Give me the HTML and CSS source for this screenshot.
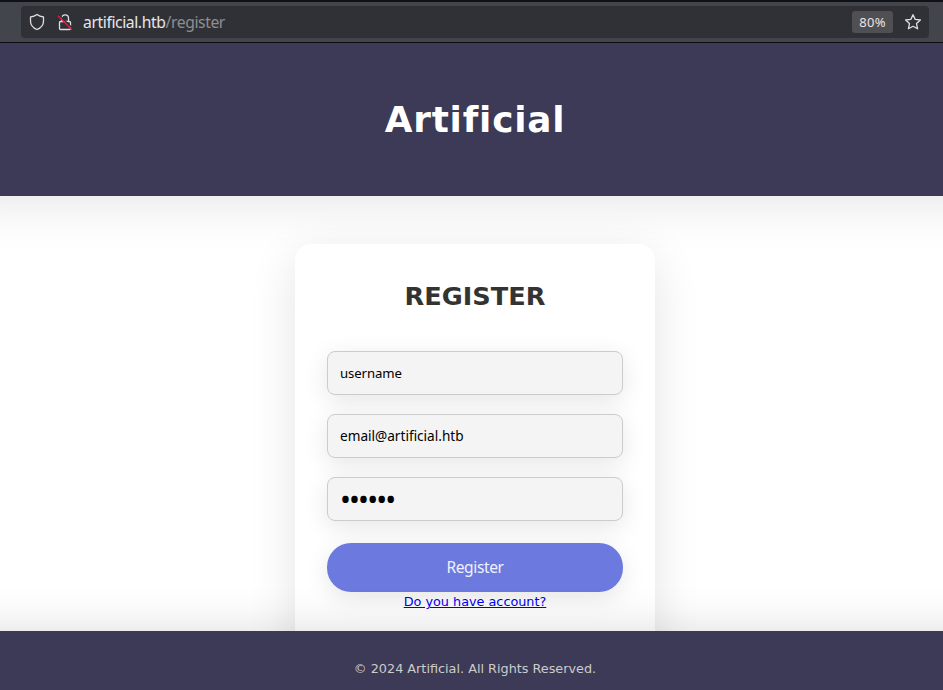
FILE: index.html
```html
<!DOCTYPE html>
<html lang="en">
<head>
<meta charset="utf-8">
<title>Artificial - Register</title>
<link rel="stylesheet" href="styles.css">
</head>
<body>
<div class="toolbar">
  <div class="urlbar">
    <svg class="shield" width="16" height="18" viewBox="0 0 16 18"><path d="M8 1.500C6.300 2.900 3.800 3.800 1.500 4V8c0 3.700 2.600 7 6.500 8.500 3.900-1.500 6.500-4.800 6.500-8.500V4C12.200 3.800 9.700 2.900 8 1.500Z"/></svg>
    <svg class="lock" width="16" height="18" viewBox="0 0 16 18"><path d="M4.700 8.500V5.200a3.400 3.400 0 0 1 6.800 0v3.300M3.500 8.500h9q1 0 1 1v6q0 1-1 1h-9q-1 0-1-1v-6q0-1 1-1Z"/><path class="gap" d="m2.200 1.900 13 13"/><path class="slash" d="m1 2.700 14 14"/></svg>
    <span class="url">artificial.htb<span class="path">/register</span></span>
    <span class="zoom">80%</span>
    <svg class="star" width="18" height="18" viewBox="0 0 18 18"><path d="m9 1.700 2.200 4.700 5.200.6-3.900 3.600 1.100 5.200L9 13.300l-4.600 2.500 1.100-5.200L1.600 7l5.200-.6Z"/></svg>
  </div>
</div>
<div class="page">
  <header><h1>Artificial</h1></header>
  <main>
    <form class="card">
      <h2>REGISTER</h2>
      <input class="field username" type="text" value="username" aria-label="Username">
      <input class="field" type="text" value="email@artificial.htb" aria-label="Email" spellcheck="false">
      <input class="field password" type="password" value="secret" aria-label="Password">
      <button type="button">Register</button>
      <a href="#">Do you have account?</a>
    </form>
  </main>
  <footer>© 2024 Artificial. All Rights Reserved.</footer>
</div>
</body>
</html>
```
FILE: styles.css
```css
* { box-sizing: border-box; }

body {
  margin: 0;
  height: 690px;
  overflow: hidden;
  display: flex;
  flex-direction: column;
  background: #fff;
  font-family: "DejaVu Sans", sans-serif;
}

.toolbar {
  position: relative;
  z-index: 1;
  height: 43px;
  flex: none;
  padding: 4px 14px 4px 21px;
  background: #42454c;
  border-top: 2px solid #101116;
  border-bottom: 1px solid #0c0c13;
}

.urlbar {
  height: 32px;
  display: flex;
  align-items: center;
  padding: 0 7px 0 8px;
  border-radius: 4px;
  background: #303136;
  color: #e6e6e8;
  font: 15.700px "Noto Sans", sans-serif;
  letter-spacing: -.4px;
}

.urlbar svg { flex: none; fill: none; stroke: #dedee0; stroke-width: 1.3; stroke-linejoin: round; }
.urlbar .lock { margin-left: 12px; }
.urlbar .gap { stroke: #303136; stroke-width: 1.4; }
.urlbar .slash { stroke: #e21a43; stroke-width: 1.5; }
.url { flex: 1; margin-left: 10px; }
.path { color: #8e8e92; }

.zoom {
  width: 41px;
  height: 22px;
  margin-right: 11px;
  border-radius: 3px;
  background: #504f54;
  font-size: 13px;
  letter-spacing: .3px;
  line-height: 23px;
  text-align: center;
}

.page {
  width: 950px;
  flex: 1;
  min-height: 0;
  display: flex;
  flex-direction: column;
}

header {
  height: 153px;
  flex: none;
  display: flex;
  align-items: center;
  justify-content: center;
  background: #3c3a56;
  box-shadow: 0 -40px 48px 48px rgba(0, 0, 0, .1);
}

h1 { margin: 0; color: #fff; font-size: 35.840px; line-height: 42px; letter-spacing: .8px; }

main { flex: 1; min-height: 0; padding-top: 48px; display: flex; justify-content: center; }

.card {
  width: 360px;
  height: 420px;
  padding: 37px 32px;
  display: flex;
  flex-direction: column;
  align-items: center;
  border-radius: 16px;
  background: #fff;
  box-shadow: 0 12px 48px rgba(0, 0, 0, .11);
}

h2 { margin: 0 0 40px; color: #333; font-size: 25.600px; line-height: 30px; }

.field {
  width: 100%;
  height: 44px;
  flex: none;
  margin: 0 0 19px;
  padding: 0 12px 2px;
  border: 1px solid #ccc;
  border-radius: 8px;
  background: #f4f4f4;
  box-shadow: 0 6px 24px rgba(0, 0, 0, .1);
  color: #000;
  font: 13.600px "Noto Sans", sans-serif;
}

.username { padding-bottom: 0; font-size: 13.200px; letter-spacing: -.1px; }
.password { font: 29px "Noto Sans", sans-serif; letter-spacing: -1.850px; }

button {
  width: 100%;
  height: 49px;
  flex: none;
  margin-top: 3px;
  padding: 0 0 1px;
  border: 0;
  border-radius: 24px;
  background: #6c79de;
  box-shadow: 0 6px 24px rgba(0, 0, 0, .1);
  color: #f0f1fc;
  font: 15.600px "Noto Sans", sans-serif;
  letter-spacing: -.4px;
}

.card a { margin-top: 2px; color: #00e; font-size: 12.800px; line-height: 16px; }

footer {
  position: relative;
  height: 59px;
  flex: none;
  padding-top: 30px;
  background: #3c3a56;
  box-shadow: 0 44px 40px 48px rgba(0, 0, 0, .12);
  color: #ccc;
  font-size: 12.800px;
  line-height: 15px;
  text-align: center;
}
```
